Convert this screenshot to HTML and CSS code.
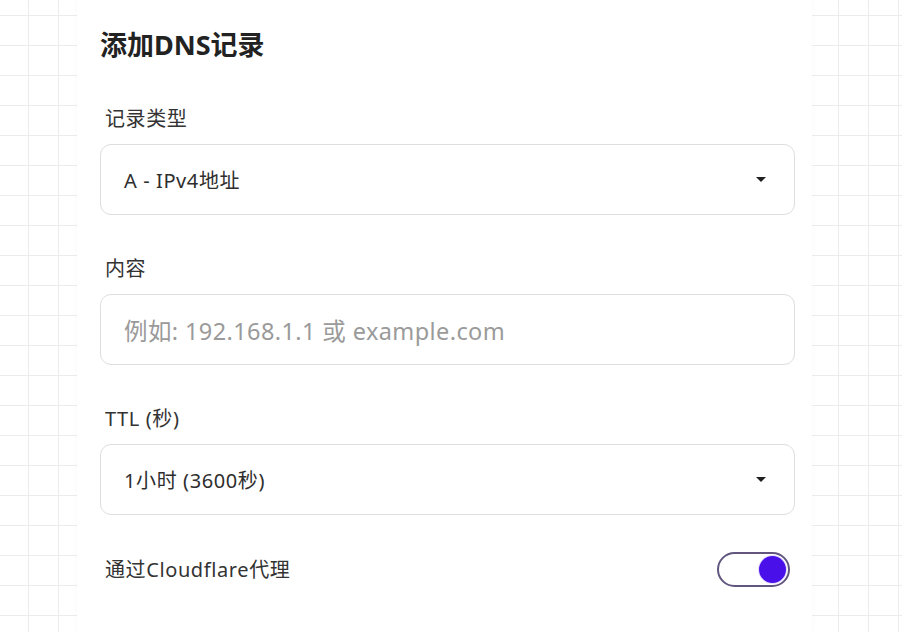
FILE: index.html
```html
<!DOCTYPE html>
<html lang="zh-CN">
<head>
<meta charset="utf-8">
<title>添加DNS记录</title>
<link rel="stylesheet" href="styles.css">
</head>
<body>
<main class="card">
  <h1 class="title">添加DNS记录</h1>

  <div class="field">
    <label class="label">记录类型</label>
    <div class="control select">
      <span class="value">A - IPv4地址</span>
      <span class="caret"></span>
    </div>
  </div>

  <div class="field">
    <label class="label">内容</label>
    <div class="control input">
      <span class="placeholder">例如: 192.168.1.1 或 example.com</span>
    </div>
  </div>

  <div class="field">
    <label class="label">TTL (秒)</label>
    <div class="control select">
      <span class="value">1小时 (3600秒)</span>
      <span class="caret"></span>
    </div>
  </div>

  <div class="toggle-row">
    <span class="label">通过Cloudflare代理</span>
    <span class="switch"><span class="knob"></span></span>
  </div>
</main>
</body>
</html>
```

FILE: styles.css
```css
html, body {
  margin: 0;
  height: 100%;
}

body {
  font-family: "Noto Sans", "Noto Sans CJK SC", sans-serif;
  color: #2b2b2b;
  background-color: #ffffff;
  background-image:
    linear-gradient(to right, #ececec 1px, transparent 1px),
    linear-gradient(to bottom, #ececec 1px, transparent 1px);
  background-size: 30px 30px;
  background-position: 28px 15px;
  overflow: hidden;
}

.card {
  box-sizing: border-box;
  margin-left: 77px;
  width: 735px;
  height: 100%;
  padding: 28px 17px 0 23px;
  background: #ffffff;
  box-shadow: 0 0 6px rgba(0, 0, 0, 0.03);
  display: flex;
  flex-direction: column;
}

.title {
  margin: 0 0 45px;
  font-size: 27px;
  line-height: 34px;
  font-weight: 700;
  color: #222;
}

.field {
  display: flex;
  flex-direction: column;
  gap: 13px;
  margin-bottom: 42px;
}

.label {
  padding-left: 5px;
  font-size: 20px;
  letter-spacing: 0.6px;
  line-height: 24px;
  color: #333;
}

.control {
  box-sizing: border-box;
  height: 71px;
  border: 1.5px solid #dedede;
  border-radius: 11px;
  display: flex;
  align-items: center;
  padding: 0 28px 0 23px;
  background: #fff;
}

.select {
  justify-content: space-between;
}

.value {
  font-size: 20px;
  letter-spacing: 0.6px;
  color: #2e2e2e;
}

.placeholder {
  font-size: 23.5px;
  letter-spacing: 0.4px;
  color: #9a9a9a;
}

.caret {
  width: 0;
  height: 0;
  border-left: 5px solid transparent;
  border-right: 5px solid transparent;
  border-top: 5px solid #1f1f1f;
}

.toggle-row {
  margin-top: -5px;
  display: flex;
  align-items: center;
  justify-content: space-between;
  padding-right: 5px;
}

.switch {
  box-sizing: border-box;
  width: 73px;
  height: 35px;
  border: 2px solid #62567e;
  border-radius: 18px;
  display: flex;
  align-items: center;
  justify-content: flex-end;
  padding-right: 2px;
  background: #fff;
}

.knob {
  width: 27px;
  height: 27px;
  border-radius: 50%;
  background: #4a10ea;
  box-shadow: 0 0 0 1px #e4dcff;
}
```
